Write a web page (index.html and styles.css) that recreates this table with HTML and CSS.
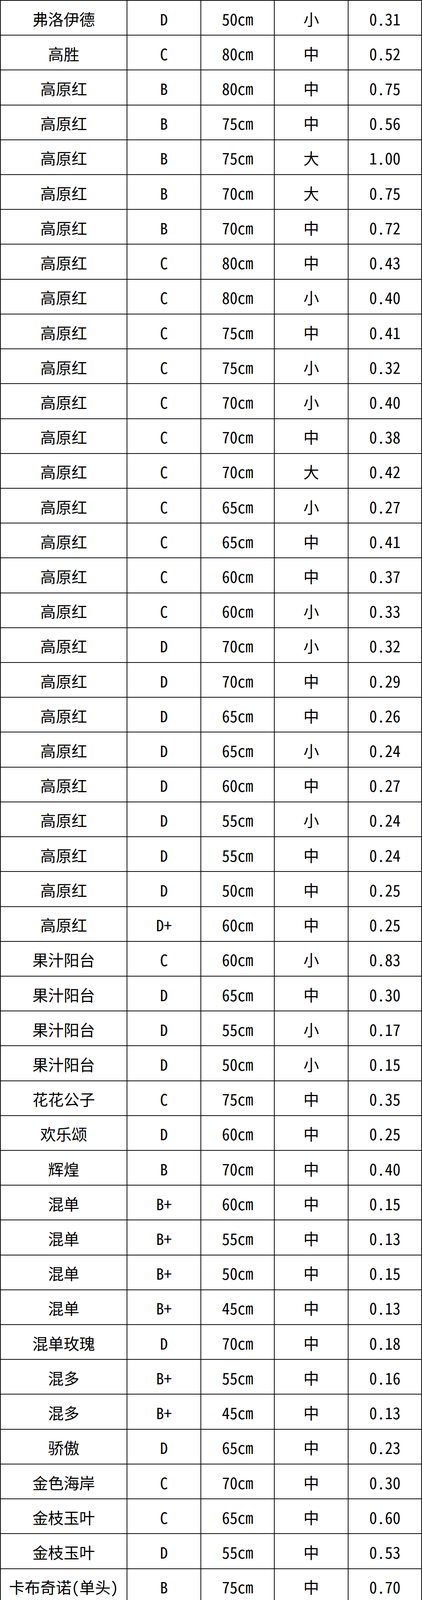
FILE: index.html
```html
<!DOCTYPE html>
<html lang="zh-CN">
<head>
<meta charset="utf-8">
<title>价格表</title>
<link rel="stylesheet" href="styles.css">
</head>
<body>
<div class="sheet">
<div class="c">弗洛伊德</div><div class="c">D</div><div class="c">50cm</div><div class="c">小</div><div class="c">0.31</div>
<div class="c">高胜</div><div class="c">C</div><div class="c">80cm</div><div class="c">中</div><div class="c">0.52</div>
<div class="c">高原红</div><div class="c">B</div><div class="c">80cm</div><div class="c">中</div><div class="c">0.75</div>
<div class="c">高原红</div><div class="c">B</div><div class="c">75cm</div><div class="c">中</div><div class="c">0.56</div>
<div class="c">高原红</div><div class="c">B</div><div class="c">75cm</div><div class="c">大</div><div class="c">1.00</div>
<div class="c">高原红</div><div class="c">B</div><div class="c">70cm</div><div class="c">大</div><div class="c">0.75</div>
<div class="c">高原红</div><div class="c">B</div><div class="c">70cm</div><div class="c">中</div><div class="c">0.72</div>
<div class="c">高原红</div><div class="c">C</div><div class="c">80cm</div><div class="c">中</div><div class="c">0.43</div>
<div class="c">高原红</div><div class="c">C</div><div class="c">80cm</div><div class="c">小</div><div class="c">0.40</div>
<div class="c">高原红</div><div class="c">C</div><div class="c">75cm</div><div class="c">中</div><div class="c">0.41</div>
<div class="c">高原红</div><div class="c">C</div><div class="c">75cm</div><div class="c">小</div><div class="c">0.32</div>
<div class="c">高原红</div><div class="c">C</div><div class="c">70cm</div><div class="c">小</div><div class="c">0.40</div>
<div class="c">高原红</div><div class="c">C</div><div class="c">70cm</div><div class="c">中</div><div class="c">0.38</div>
<div class="c">高原红</div><div class="c">C</div><div class="c">70cm</div><div class="c">大</div><div class="c">0.42</div>
<div class="c">高原红</div><div class="c">C</div><div class="c">65cm</div><div class="c">小</div><div class="c">0.27</div>
<div class="c">高原红</div><div class="c">C</div><div class="c">65cm</div><div class="c">中</div><div class="c">0.41</div>
<div class="c">高原红</div><div class="c">C</div><div class="c">60cm</div><div class="c">中</div><div class="c">0.37</div>
<div class="c">高原红</div><div class="c">C</div><div class="c">60cm</div><div class="c">小</div><div class="c">0.33</div>
<div class="c">高原红</div><div class="c">D</div><div class="c">70cm</div><div class="c">小</div><div class="c">0.32</div>
<div class="c">高原红</div><div class="c">D</div><div class="c">70cm</div><div class="c">中</div><div class="c">0.29</div>
<div class="c">高原红</div><div class="c">D</div><div class="c">65cm</div><div class="c">中</div><div class="c">0.26</div>
<div class="c">高原红</div><div class="c">D</div><div class="c">65cm</div><div class="c">小</div><div class="c">0.24</div>
<div class="c">高原红</div><div class="c">D</div><div class="c">60cm</div><div class="c">中</div><div class="c">0.27</div>
<div class="c">高原红</div><div class="c">D</div><div class="c">55cm</div><div class="c">小</div><div class="c">0.24</div>
<div class="c">高原红</div><div class="c">D</div><div class="c">55cm</div><div class="c">中</div><div class="c">0.24</div>
<div class="c">高原红</div><div class="c">D</div><div class="c">50cm</div><div class="c">中</div><div class="c">0.25</div>
<div class="c">高原红</div><div class="c">D+</div><div class="c">60cm</div><div class="c">中</div><div class="c">0.25</div>
<div class="c">果汁阳台</div><div class="c">C</div><div class="c">60cm</div><div class="c">小</div><div class="c">0.83</div>
<div class="c">果汁阳台</div><div class="c">D</div><div class="c">65cm</div><div class="c">中</div><div class="c">0.30</div>
<div class="c">果汁阳台</div><div class="c">D</div><div class="c">55cm</div><div class="c">小</div><div class="c">0.17</div>
<div class="c">果汁阳台</div><div class="c">D</div><div class="c">50cm</div><div class="c">小</div><div class="c">0.15</div>
<div class="c">花花公子</div><div class="c">C</div><div class="c">75cm</div><div class="c">中</div><div class="c">0.35</div>
<div class="c">欢乐颂</div><div class="c">D</div><div class="c">60cm</div><div class="c">中</div><div class="c">0.25</div>
<div class="c">辉煌</div><div class="c">B</div><div class="c">70cm</div><div class="c">中</div><div class="c">0.40</div>
<div class="c">混单</div><div class="c">B+</div><div class="c">60cm</div><div class="c">中</div><div class="c">0.15</div>
<div class="c">混单</div><div class="c">B+</div><div class="c">55cm</div><div class="c">中</div><div class="c">0.13</div>
<div class="c">混单</div><div class="c">B+</div><div class="c">50cm</div><div class="c">中</div><div class="c">0.15</div>
<div class="c">混单</div><div class="c">B+</div><div class="c">45cm</div><div class="c">中</div><div class="c">0.13</div>
<div class="c">混单玫瑰</div><div class="c">D</div><div class="c">70cm</div><div class="c">中</div><div class="c">0.18</div>
<div class="c">混多</div><div class="c">B+</div><div class="c">55cm</div><div class="c">中</div><div class="c">0.16</div>
<div class="c">混多</div><div class="c">B+</div><div class="c">45cm</div><div class="c">中</div><div class="c">0.13</div>
<div class="c">骄傲</div><div class="c">D</div><div class="c">65cm</div><div class="c">中</div><div class="c">0.23</div>
<div class="c">金色海岸</div><div class="c">C</div><div class="c">70cm</div><div class="c">中</div><div class="c">0.30</div>
<div class="c">金枝玉叶</div><div class="c">C</div><div class="c">65cm</div><div class="c">中</div><div class="c">0.60</div>
<div class="c">金枝玉叶</div><div class="c">D</div><div class="c">55cm</div><div class="c">中</div><div class="c">0.53</div>
<div class="c">卡布奇诺(单头)</div><div class="c">B</div><div class="c">75cm</div><div class="c">中</div><div class="c">0.70</div>
<div class="c">卡布奇诺(单头)</div><div class="c">B</div><div class="c">70cm</div><div class="c">中</div><div class="c">0.67</div>
<div class="c">卡布奇诺(单头)</div><div class="c">B</div><div class="c">65cm</div><div class="c">中</div><div class="c">0.71</div>
<div class="c">卡布奇诺(单头)</div><div class="c">C</div><div class="c">65cm</div><div class="c">中</div><div class="c">0.48</div>
<div class="c">卡布奇诺(单头)</div><div class="c">C</div><div class="c">60cm</div><div class="c">中</div><div class="c">0.47</div>
<div class="c">卡布奇诺(单头)</div><div class="c">D</div><div class="c">65cm</div><div class="c">中</div><div class="c">0.36</div>
<div class="c">卡布奇诺(单头)</div><div class="c">D</div><div class="c">60cm</div><div class="c">中</div><div class="c">0.40</div>
<div class="c">卡布奇诺(单头)</div><div class="c">D</div><div class="c">55cm</div><div class="c">中</div><div class="c">0.39</div>
<div class="c">卡布奇诺(单头)</div><div class="c">D</div><div class="c">55cm</div><div class="c">大</div><div class="c">0.36</div>
<div class="c">卡罗拉（网）</div><div class="c">C</div><div class="c">75cm</div><div class="c">中</div><div class="c">0.25</div>
<div class="c">洛神</div><div class="c">C+</div><div class="c">75cm</div><div class="c">中</div><div class="c">0.42</div>
<div class="c">洛神</div><div class="c">D</div><div class="c">75cm</div><div class="c">中</div><div class="c">0.65</div>
<div class="c">洛神</div><div class="c">D</div><div class="c">70cm</div><div class="c">中</div><div class="c">0.26</div>
<div class="c">洛神</div><div class="c">D</div><div class="c">60cm</div><div class="c">中</div><div class="c">0.20</div>
<div class="c">洛神</div><div class="c">D</div><div class="c">55cm</div><div class="c">中</div><div class="c">0.15</div>
<div class="c">洛神</div><div class="c">D+</div><div class="c">65cm</div><div class="c">中</div><div class="c">0.16</div>
<div class="c">洛神</div><div class="c">E</div><div class="c">75cm</div><div class="c">中</div><div class="c">1.42</div>
<div class="c">曼塔</div><div class="c">C</div><div class="c">70cm</div><div class="c">中</div><div class="c">0.30</div>
<div class="c">曼塔</div><div class="c">C</div><div class="c">65cm</div><div class="c">中</div><div class="c">0.43</div>
<div class="c">曼塔</div><div class="c">D</div><div class="c">70cm</div><div class="c">中</div><div class="c">0.27</div>
<div class="c">曼塔</div><div class="c">D</div><div class="c">65cm</div><div class="c">中</div><div class="c">0.28</div>
</div>
</body>
</html>
```
FILE: styles.css
```css
html, body {
  margin: 0;
  padding: 0;
  background: #ffffff;
}

.sheet {
  width: 1080px;
  height: 5890px;
  box-sizing: border-box;
  overflow: hidden;
  display: grid;
  grid-template-columns: 324px 189px 188px 189px 188px;
  grid-template-rows: repeat(66, 1fr);
  border-top: 2px solid #0a0a0a;
  border-left: 2px solid #0a0a0a;
  font-family: "Noto Sans CJK SC", "Noto Sans", sans-serif;
  font-size: 40px;
  font-feature-settings: "hwid" 1;
  color: #000;
}

.c {
  box-sizing: border-box;
  min-height: 0;
  border-right: 2px solid #0a0a0a;
  border-bottom: 2px solid #0a0a0a;
  display: flex;
  align-items: center;
  justify-content: center;
  padding-top: 4px;
  white-space: nowrap;
  line-height: 1;
}
```
